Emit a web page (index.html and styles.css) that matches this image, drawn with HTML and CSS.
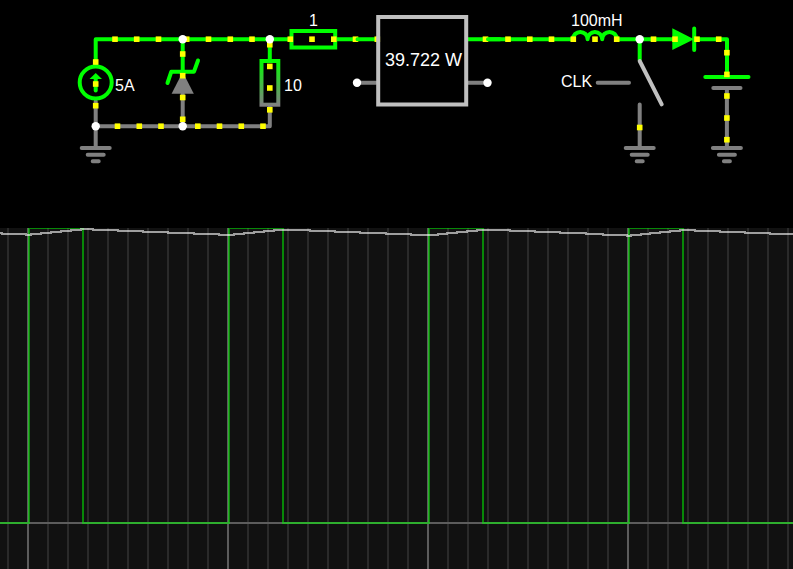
FILE: index.html
```html
<!DOCTYPE html>
<html lang="en">
<head>
<meta charset="utf-8">
<title>Circuit simulator</title>
<link rel="stylesheet" href="styles.css">
</head>
<body>
<main class="simulator">
<svg class="circuit" viewBox="0 0 793 228" role="img" aria-label="Circuit diagram">
  <defs>
    <linearGradient id="drop" gradientUnits="userSpaceOnUse" x1="0" y1="60" x2="0" y2="105">
      <stop offset="0" stop-color="#00ff00"/>
      <stop offset="1" stop-color="#808080"/>
    </linearGradient>
    <rect id="dot" class="dot" x="-2.8" y="-2.8" width="5.6" height="5.6"/>
    <g id="ground" class="wire low">
      <path d="M-14 148H14M-8 154.7H8M-3 161.3H3"/>
    </g>
  </defs>

  <!-- wires -->
  <g class="wire high">
    <path d="M95.7 66V39.2H290M337 39.2H353M468 39.2H484M487 39.2H573M617 39.2H672M695 39.2H727V76"/>
    <path d="M182.7 39.2V72M269.8 39.2V60M639.7 39.2V60"/>
  </g>
  <g class="wire low">
    <path d="M95.7 101V148M95.7 126.2H269.8V107M182.7 94V126M639.7 104.5V148M726.9 89V148"/>
    <path d="M357 82.7H376M468 82.7H488M597.7 82.7H629"/>
  </g>
  <use href="#ground" x="95.7"/>
  <use href="#ground" x="639.7"/>
  <use href="#ground" x="726.9"/>

  <!-- wattmeter leads overlap the dots that arrive from the neighbouring wire -->
  <use href="#dot" x="355.5" y="39.2"/>
  <use href="#dot" x="485.5" y="39.2"/>
  <path class="wire high" d="M357.5 39.2H376M488 39.2H500"/>
  <use href="#dot" x="377.3" y="39.2"/>

  <!-- current source -->
  <circle class="wire high" cx="95.7" cy="82.5" r="16"/>
  <path class="wire high" d="M95.7 79V90.5"/>
  <path class="fill-high" d="M95.7 73L102 79H89.5Z"/>

  <!-- zener diode -->
  <path class="fill-low" d="M182.7 72L193.8 93.7H171.6Z"/>
  <path class="wire high" d="M198 60.5L194 71.7H171.3L167.5 83"/>

  <!-- resistors -->
  <rect class="wire high square" x="291.5" y="31" width="43.7" height="16.5"/>
  <rect class="wire square gradient" x="261.5" y="61" width="16.8" height="43.7"/>

  <!-- wattmeter -->
  <rect class="wire body square" x="378.2" y="17" width="88" height="87.5"/>

  <!-- inductor -->
  <path class="wire high" d="M573 39.2a7.3 7.3 0 0 1 14.6 0a7.3 7.3 0 0 1 14.6 0a7.3 7.3 0 0 1 14.6 0"/>

  <!-- switch, diode and battery -->
  <path class="wire body" d="M639.7 61L661.7 104.3"/>
  <path class="fill-high" d="M672.3 28.3V50L694 39.2Z"/>
  <path class="wire high" d="M694.2 28.5V50M705.3 77H748.5"/>
  <path class="wire low" d="M713.3 88H740.5"/>

  <!-- charge dots -->
  <use href="#dot" x="115" y="39.2"/><use href="#dot" x="136.7" y="39.2"/><use href="#dot" x="158.5" y="39.2"/>
  <use href="#dot" x="186.7" y="39.2"/><use href="#dot" x="208.5" y="39.2"/><use href="#dot" x="230.3" y="39.2"/><use href="#dot" x="252" y="39.2"/>
  <use href="#dot" x="290.3" y="39.2"/><use href="#dot" x="312" y="39.2"/><use href="#dot" x="333.8" y="39.2"/>
  <use href="#dot" x="508" y="39.2"/><use href="#dot" x="529.8" y="39.2"/><use href="#dot" x="551.5" y="39.2"/>
  <use href="#dot" x="573.3" y="39.2"/><use href="#dot" x="595" y="39.2"/><use href="#dot" x="616.7" y="39.2"/>
  <use href="#dot" x="653.5" y="39.2"/><use href="#dot" x="675" y="39.2"/><use href="#dot" x="697" y="39.2"/><use href="#dot" x="718.7" y="39.2"/>
  <use href="#dot" x="95.7" y="62"/><use href="#dot" x="95.7" y="84"/><use href="#dot" x="95.7" y="105.7"/>
  <use href="#dot" x="182.7" y="54"/><use href="#dot" x="182.7" y="75.7"/><use href="#dot" x="182.7" y="97.5"/><use href="#dot" x="182.7" y="119.3"/>
  <use href="#dot" x="269.8" y="44.7"/><use href="#dot" x="269.8" y="66.4"/><use href="#dot" x="269.8" y="88"/><use href="#dot" x="269.8" y="109.8"/>
  <use href="#dot" x="117.5" y="126.2"/><use href="#dot" x="139.3" y="126.2"/><use href="#dot" x="161" y="126.2"/>
  <use href="#dot" x="197.8" y="126.2"/><use href="#dot" x="219.5" y="126.2"/><use href="#dot" x="241.3" y="126.2"/><use href="#dot" x="263" y="126.2"/>
  <use href="#dot" x="639.7" y="127.5"/>
  <use href="#dot" x="726.9" y="52.7"/><use href="#dot" x="726.9" y="74.4"/><use href="#dot" x="726.9" y="96"/><use href="#dot" x="726.9" y="118"/><use href="#dot" x="726.9" y="139.7"/>

  <!-- junctions and open terminals -->
  <g class="node">
    <circle cx="182.7" cy="39.2" r="4.2"/><circle cx="269.8" cy="39.2" r="4.2"/><circle cx="639.7" cy="39.2" r="4.2"/>
    <circle cx="95.7" cy="126.2" r="4.2"/><circle cx="182.7" cy="126.2" r="4.2"/>
    <circle cx="357" cy="82.7" r="4.2"/><circle cx="487.5" cy="82.7" r="4.2"/>
  </g>

  <g class="label">
    <text x="115" y="91">5A</text>
    <text x="284" y="91">10</text>
    <text x="309" y="26">1</text>
    <text x="571" y="26">100mH</text>
    <text x="561" y="87">CLK</text>
    <text class="reading" x="385" y="66">39.722 W</text>
  </g>
</svg>

<svg class="scope" viewBox="0 228 793 341" role="img" aria-label="Oscilloscope traces">
  <defs>
    <pattern id="minor" patternUnits="userSpaceOnUse" x="7" y="0" width="20" height="600">
      <rect class="minor" width="2" height="600"/>
    </pattern>
  </defs>
  <rect x="0" y="228" width="793" height="341" fill="url(#minor)"/>
  <path class="axis" d="M0 523H793M28 228V569M228 228V569M428 228V569M628 228V569"/>
  <path class="clock" d="M0 523H28M84 523H228M284 523H428M484 523H628M684 523H793"/>
  <path class="clock" d="M29 228V524M83 228V524M229 228V524M283 228V524M429 228V524M483 228V524M629 228V524M683 228V524M30 228H82M230 228H282M430 228H482M630 228H682"/>
  <path class="trace" d="M0 233H2V234H26V235H31V234H41V233H51V232H61V231H71V230H81V229H93V230H118V231H143V232H168V233H194V234H219V235H234V234H244V233H254V232H264V231H274V230H310V231H335V232H360V233H386V234H411V235H438V234H447V233H457V232H467V231H477V230H510V231H535V232H560V233H586V234H603V235H627V236H631V235H641V234H650V233H660V232H670V231H680V230H695V231H720V232H745V233H770V234H793"/>
</svg>
</main>
</body>
</html>
```
FILE: styles.css
```css
body {
  margin: 0;
  background: #000;
}

.simulator {
  display: flex;
  flex-direction: column;
}

.circuit,
.scope {
  display: block;
  width: 100%;
  height: auto;
}

.scope {
  background: #111;
}

.wire {
  fill: none;
  stroke-width: 4;
  stroke-linecap: round;
  stroke-linejoin: round;
}

.high { stroke: #0f0; }
.low { stroke: #808080; }
.body { stroke: #c0c0c0; }
.gradient { stroke: url(#drop); }
.square { stroke-linejoin: miter; }
.fill-high { fill: #0f0; }
.fill-low { fill: #808080; }
.dot { fill: #ff0; }
.node { fill: #fff; }

.label {
  fill: #fff;
  font-family: "Liberation Sans", Arial, sans-serif;
  font-size: 16px;
}

.reading { font-size: 18px; }

.minor { fill: #2a2a2a; }

.axis,
.clock,
.trace {
  fill: none;
  stroke-width: 2;
}

.axis { stroke: #5c5c5c; }
.clock { stroke: rgba(0, 255, 0, 0.5); }
.trace { stroke: rgba(255, 255, 255, 0.6); }
```
